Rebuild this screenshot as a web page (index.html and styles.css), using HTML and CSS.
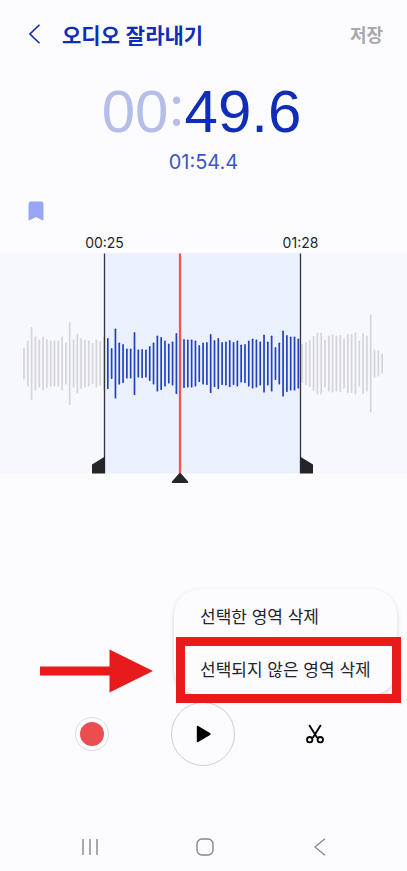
FILE: index.html
```html
<!DOCTYPE html>
<html lang="ko">
<head>
<meta charset="utf-8">
<meta name="viewport" content="width=device-width, initial-scale=1">
<title>오디오 잘라내기</title>
<link rel="stylesheet" href="styles.css">
</head>
<body>
<header class="topbar">
  <button class="icon-button" aria-label="뒤로">
    <svg width="12" height="20" viewBox="0 0 12 20"><path d="M10.500 .8L1 10L10.500 19.200" fill="none" stroke="currentColor" stroke-width="1.600"/></svg>
  </button>
  <h1 class="title">오디오 잘라내기</h1>
  <button class="save">저장</button>
</header>

<main>
  <div class="timer"><span class="timer-idle">00</span><span class="timer-idle colon">:</span><span>49.6</span></div>
  <div class="duration">01:54.4</div>
  <button class="bookmark" aria-label="북마크">
    <svg width="16" height="20" viewBox="0 0 16 20"><path d="M2.500 .5H13Q15.500 .5 15.500 3V18.500Q15.500 19.800 14.300 19.200L8 16L1.700 19.200Q.5 19.800 .5 18.500V3Q.5 .5 2.500 .5Z" fill="currentColor"/></svg>
  </button>
  <div class="range-labels"><span>00:25</span><span>01:28</span></div>
  <svg class="wave" viewBox="0 0 407 231" aria-hidden="true">
    <rect class="track" width="407" height="220.500"/>
    <rect class="selection" x="104.500" width="196" height="220.500"/>
    <g id="bars"></g>
    <path class="edge" d="M104.500 .5V220M300.500 .5V220"/>
    <path class="handle" d="M92 211.500L105 203.500V220.500H92ZM300 203.500L313 211.500V220.500H300Z"/>
    <path class="playhead" d="M180 .5V221"/>
    <path class="handle" d="M180 220Q180.600 220 181 220.500L188 228.500Q188.500 230 187.500 230H172.500Q171.500 230 172 228.500L179 220.500Q179.400 220 180 220Z"/>
  </svg>
</main>

<section class="actions">
  <svg class="arrow" width="114" height="44" viewBox="0 0 114 44" aria-hidden="true"><path d="M0 17.500H69.500V.5L113 22L69.500 43.500V26.500H0Z" fill="currentColor"/></svg>
  <div class="menu">
    <button class="menu-item">선택한 영역 삭제</button>
    <button class="menu-item marked">선택되지 않은 영역 삭제</button>
  </div>
</section>

<section class="controls">
  <button class="record" aria-label="녹음"></button>
  <button class="play" aria-label="재생">
    <svg width="16" height="18" viewBox="0 0 16 18"><path d="M1.800 1.800Q1.800 .3 3.200 1L15 8Q16.200 9 15 10L3.200 17Q1.800 17.700 1.800 16.200Z" fill="currentColor"/></svg>
  </button>
  <button class="icon-button cut" aria-label="잘라내기">
    <svg width="20" height="20" viewBox="0 0 20 20" fill="none" stroke="currentColor" stroke-width="1.800"><path d="M4.200 1L11.200 12.200Q12 13.600 13.200 14M15.800 1L8.800 12.200Q8 13.600 6.800 14"/><circle cx="4.700" cy="15.700" r="2.700"/><circle cx="15.300" cy="15.700" r="2.700"/></svg>
  </button>
</section>

<nav class="sysnav">
  <button class="icon-button" aria-label="최근 앱">
    <svg width="18" height="18" viewBox="0 0 18 18"><path d="M2 1V17M9 1V17M16 1V17" stroke="currentColor" stroke-width="1.400"/></svg>
  </button>
  <button class="icon-button" aria-label="홈">
    <svg width="18" height="18" viewBox="0 0 18 18"><rect x="1" y="1" width="16" height="16" rx="5" fill="none" stroke="currentColor" stroke-width="1.400"/></svg>
  </button>
  <button class="icon-button" aria-label="이전">
    <svg width="12" height="18" viewBox="0 0 12 18"><path d="M11 .8L1 9L11 17.200" fill="none" stroke="currentColor" stroke-width="1.300"/></svg>
  </button>
</nav>
<script src="wave.js"></script>
</body>
</html>
```
FILE: styles.css
```css
* { box-sizing: border-box; }

body {
  margin: 0;
  min-height: 100vh;
  display: flex;
  flex-direction: column;
  background: #fcfcff;
  color: #252529;
  font-family: Inter, "Noto Sans CJK KR", sans-serif;
}

button {
  margin: 0;
  padding: 0;
  border: 0;
  background: none;
  color: inherit;
  font: inherit;
}

svg { display: block; }

.icon-button { display: grid; place-items: center; }

.topbar {
  display: flex;
  align-items: center;
  height: 68px;
  padding: 0 24px 0 29px;
  color: #102db5;
  font-family: "Noto Sans CJK KR", sans-serif;
}

.title {
  flex: 1;
  margin: 0 0 0 21px;
  font-size: 21px;
  line-height: 28px;
  font-weight: 700;
}

.save {
  color: #a9a9ab;
  font-size: 18px;
  line-height: 28px;
  font-weight: 700;
}

.timer {
  display: flex;
  align-items: flex-start;
  justify-content: center;
  height: 76px;
  padding: 12px 4px 0 0;
  color: #102db5;
  font-family: "Liberation Sans", sans-serif;
  font-size: 60px;
  line-height: 64px;
}

.timer-idle { color: #b4bee9; }

.colon {
  font-family: Inter, sans-serif;
  font-size: 56px;
  line-height: 52px;
}

.duration {
  margin-top: 6px;
  text-align: center;
  color: #3d56c4;
  font-size: 20px;
  line-height: 24px;
}

.bookmark {
  display: block;
  margin: 27px 0 0 28px;
  color: #97a7f5;
}

.range-labels {
  display: grid;
  grid-template-columns: 209fr 183fr 15fr;
  margin-top: 12px;
  font-size: 14px;
  line-height: 20px;
  text-align: center;
}

.wave { width: 100%; height: auto; }
.track { fill: #f7f8fe; }
.selection { fill: #ebf0fd; }
.bar { stroke: #d5d5d9; stroke-width: 1.7; stroke-linecap: round; }
.bar.selected { stroke: #2242bd; }
.edge { stroke: #333338; stroke-width: 1.3; }
.playhead { stroke: #f35252; stroke-width: 2.2; }
.handle { fill: #252529; }

.actions {
  position: relative;
  z-index: 1;
  display: flex;
  align-items: flex-end;
  justify-content: space-between;
  margin-top: 105px;
  padding: 0 10px 0 40px;
}

.arrow { margin-bottom: 2px; color: #e71b1b; }

.menu {
  width: 223px;
  border-radius: 26px;
  background: #fcfcff;
  box-shadow: 0 2px 5px rgba(0, 0, 0, 0.16);
}

.menu-item {
  display: block;
  position: relative;
  width: 100%;
  height: 53px;
  padding-left: 26px;
  font-family: "Noto Sans CJK KR", sans-serif;
  font-size: 17px;
  line-height: 24px;
  text-align: left;
}

.marked::after {
  content: "";
  position: absolute;
  inset: -5px -4px -8px 2px;
  border: 9px solid #e71b1b;
}

.controls {
  display: grid;
  grid-template-columns: repeat(3, 1fr);
  place-items: center;
  margin-top: 7px;
  padding: 0 36px;
  color: #000;
}

.record {
  width: 34px;
  height: 34px;
  padding: 4px;
  border: 1px solid #dcdce0;
  border-radius: 50%;
  background: #eb4e4e content-box;
}

.play {
  display: grid;
  place-items: center;
  width: 64px;
  height: 64px;
  border: 1px solid #cfcfd2;
  border-radius: 50%;
}

.sysnav {
  display: grid;
  grid-template-columns: repeat(3, 1fr);
  height: 48px;
  margin-top: auto;
  padding: 0 30px 0 32px;
  color: #87878b;
}
```
FILE: wave.js
```js
// Half-heights of the amplitude bars, left to right.
const levels = [
  16, 23, 36.5, 27, 24, 27, 24.5, 23, 23, 23, 27, 21, 41.5, 24, 30, 25.5, 24, 23, 20.5, 24, 22.5, 27,
  25.5, 15.5, 35, 21, 19.5, 15, 15, 31.5, 14, 14.5, 14, 17.5, 21, 28, 26.5, 23, 20, 22, 30.5, 24,
  24.5, 24, 24, 23, 18.5, 21, 21.5, 29.5, 23.5, 25.5, 21.5, 22, 23.5, 21.5, 23, 19, 19.5, 23, 25, 24,
  22, 29, 22, 28, 16.5, 21, 33, 28.5, 27, 27, 25,
  19.5, 21.5, 23.5, 27.5, 31, 31, 24, 28, 29, 28, 28.5, 25, 29.5, 29.5, 31, 23, 30.5, 28, 49, 14, 13, 10
];
const start = 24, step = 3.81, middle = 110.5;
const group = document.getElementById("bars");
levels.forEach((level, i) => {
  const x = start + i * step;
  const line = document.createElementNS("http://www.w3.org/2000/svg", "line");
  line.setAttribute("x1", x);
  line.setAttribute("x2", x);
  line.setAttribute("y1", middle - level + 0.8);
  line.setAttribute("y2", middle + level - 0.8);
  line.setAttribute("class", x > 104.5 && x < 300.5 ? "bar selected" : "bar");
  group.appendChild(line);
});
```
